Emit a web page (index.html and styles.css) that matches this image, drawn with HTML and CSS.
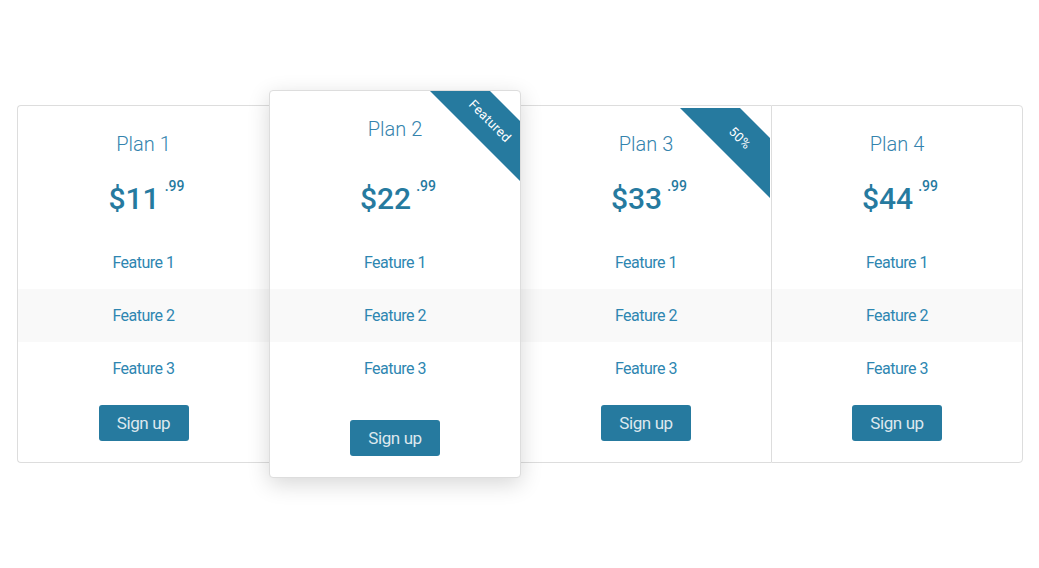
FILE: index.html
```html
<!DOCTYPE html>
<html>
<head>
<meta charset="utf-8">
<link rel="stylesheet" href="styles.css">
</head>
<body>
<div class="pricing">
  <div class="plan first">
    <div class="plan-head">
      <h3 class="plan-title">Plan 1</h3>
      <div class="plan-price">$11<sup>.99</sup></div>
    </div>
    <ul class="features">
      <li>Feature 1</li>
      <li class="alt">Feature 2</li>
      <li>Feature 3</li>
    </ul>
    <div class="plan-foot"><a class="btn">Sign up</a></div>
  </div>
  <div class="plan featured">
    <div class="ribbon"><span>Featured</span></div>
    <div class="plan-head">
      <h3 class="plan-title">Plan 2</h3>
      <div class="plan-price">$22<sup>.99</sup></div>
    </div>
    <ul class="features">
      <li>Feature 1</li>
      <li class="alt">Feature 2</li>
      <li>Feature 3</li>
    </ul>
    <div class="plan-foot"><a class="btn">Sign up</a></div>
  </div>
  <div class="plan middle">
    <div class="ribbon ribbon-inset"><span>50%</span></div>
    <div class="plan-head">
      <h3 class="plan-title">Plan 3</h3>
      <div class="plan-price">$33<sup>.99</sup></div>
    </div>
    <ul class="features">
      <li>Feature 1</li>
      <li class="alt">Feature 2</li>
      <li>Feature 3</li>
    </ul>
    <div class="plan-foot"><a class="btn">Sign up</a></div>
  </div>
  <div class="plan last">
    <div class="plan-head">
      <h3 class="plan-title">Plan 4</h3>
      <div class="plan-price">$44<sup>.99</sup></div>
    </div>
    <ul class="features">
      <li>Feature 1</li>
      <li class="alt">Feature 2</li>
      <li>Feature 3</li>
    </ul>
    <div class="plan-foot"><a class="btn">Sign up</a></div>
  </div>
</div>
</body>
</html>
```

FILE: styles.css
```css
* { box-sizing: border-box; }

html, body {
  margin: 0;
  padding: 0;
  background: #ffffff;
}

html {
  height: 100%;
}

body {
  min-height: 100%;
  padding-top: 90px;
  font-family: Roboto, "Liberation Sans", sans-serif;
}

.pricing {
  width: 1006px;
  margin-left: 17px;
  display: grid;
  grid-template-columns: 252px 252px 250px 252px;
  align-items: start;
}

.plan {
  position: relative;
  background: #ffffff;
  display: flex;
  flex-direction: column;
  margin-top: 15px;
  border-top: 1px solid #dddddd;
  border-bottom: 1px solid #dddddd;
}

.plan.first {
  border-left: 1px solid #dddddd;
  border-radius: 4px 0 0 4px;
}

.plan.last {
  border-left: 1px solid #dddddd;
  border-right: 1px solid #dddddd;
  border-radius: 0 4px 4px 0;
}

.plan-head {
  padding: 26px 0 17px;
  text-align: center;
}

.plan-title {
  margin: 0 0 23px;
  font-family: Roboto, sans-serif;
  font-weight: 300;
  font-size: 20px;
  line-height: 24px;
  color: #3483ad;
}

.plan-price {
  font-family: Roboto, sans-serif;
  font-weight: 500;
  font-size: 30px;
  line-height: 40px;
  height: 40px;
  color: #267a9f;
  padding-left: 6px;
}

.plan-price sup {
  font-size: 14px;
  font-weight: 500;
  position: relative;
  top: 0;
  vertical-align: top;
  line-height: 14px;
  margin-left: 5px;
}

.features {
  list-style: none;
  margin: 0;
  padding: 0;
}

.features li {
  height: 53px;
  line-height: 53px;
  text-align: center;
  font-family: Roboto, sans-serif;
  font-size: 16px;
  letter-spacing: -0.5px;
  color: #2e86b1;
}

.features li.alt {
  background: #f9f9f9;
}

.plan-foot {
  padding: 10px 0 21px;
  display: flex;
  justify-content: center;
}

.btn {
  display: inline-block;
  width: 90px;
  height: 36px;
  line-height: 36px;
  text-align: center;
  background: #267a9f;
  color: #dde8ee;
  border-radius: 3px;
  font-family: Roboto, sans-serif;
  font-size: 17px;
  letter-spacing: -0.4px;
}

.featured {
  margin-top: 0;
  border: 1px solid #dddddd;
  border-radius: 4px;
  overflow: hidden;
  z-index: 2;
  box-shadow: 0 6px 22px rgba(0, 0, 0, 0.16);
}

.featured .plan-title {
  margin-bottom: 38px;
}

.featured .plan-foot {
  padding-top: 25px;
}

.ribbon {
  position: absolute;
  top: 0;
  right: 0;
  width: 90px;
  height: 90px;
  background: #267a9f;
  clip-path: polygon(0 0, 60px 0, 90px 30px, 90px 90px);
}

.ribbon-inset {
  top: 2px;
  right: 1px;
}

.ribbon span {
  position: absolute;
  left: 60px;
  top: 30px;
  transform: translate(-50%, -50%) rotate(45deg);
  color: #ffffff;
  font-family: Roboto, sans-serif;
  font-size: 13px;
  line-height: 15px;
  white-space: nowrap;
  letter-spacing: 0.3px;
}
```
